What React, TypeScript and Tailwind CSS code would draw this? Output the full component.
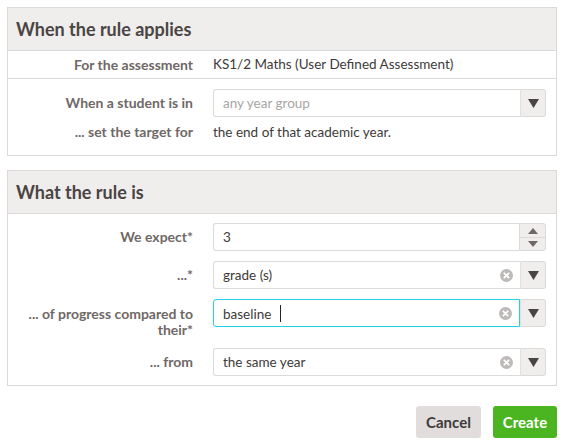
import React from "react";

const font = { fontFamily: "Lato, 'Noto Sans', sans-serif" };

function Caret() {
  return (
    <svg width="11" height="9" viewBox="0 0 11 9">
      <path d="M0 0 H11 L5.5 9 Z" fill="#4a4443" />
    </svg>
  );
}

function ClearIcon() {
  return (
    <svg width="13" height="13" viewBox="0 0 13 13">
      <circle cx="6.5" cy="6.5" r="6.5" fill="#bdbab9" />
      <path d="M4.3 4.3 L8.7 8.7 M8.7 4.3 L4.3 8.7" stroke="#fff" strokeWidth="1.8" strokeLinecap="round" />
    </svg>
  );
}

function SelectBox({
  value,
  placeholder,
  clearable,
  focused,
}: {
  value?: string;
  placeholder?: string;
  clearable?: boolean;
  focused?: boolean;
}) {
  return (
    <div className="flex h-[28px] w-full">
      <div
        className={
          focused
            ? "flex flex-1 items-center rounded-l-[3px] border border-[#1fd3e6] bg-white pl-[9px] pr-[7px]"
            : "flex flex-1 items-center rounded-l-[3px] border border-r-0 border-[#dcdad9] bg-white pl-[9px] pr-[7px]"
        }
      >
        {value ? (
          <span className="text-[13.5px] text-[#3d3a39]">
            {value}
            {focused && <span className="ml-[9px] inline-block h-[17px] w-[1px] translate-y-[3px] bg-[#222]" />}
          </span>
        ) : (
          <span className="text-[13.5px] text-[#a9a5a4]">{placeholder}</span>
        )}
        <div className="flex-1" />
        {clearable && <ClearIcon />}
      </div>
      <div className="flex w-[26px] items-center justify-center rounded-r-[3px] border border-l-[#e2e0df] border-[#dcdad9] bg-[#efeeed]">
        <Caret />
      </div>
    </div>
  );
}

function NumberBox({ value }: { value: string }) {
  return (
    <div className="flex h-[28px] w-full">
      <div className="flex flex-1 items-center rounded-l-[3px] border border-r-0 border-[#dcdad9] bg-white pl-[9px]">
        <span className="text-[13.5px] text-[#3d3a39]">{value}</span>
      </div>
      <div className="flex w-[27px] flex-col rounded-r-[3px] border border-[#dcdad9] bg-[#efeeed]">
        <div className="flex flex-1 items-center justify-center border-b border-[#dcdad9]">
          <svg width="10" height="6" viewBox="0 0 10 6">
            <path d="M0 6 H10 L5 0 Z" fill="#6f6866" />
          </svg>
        </div>
        <div className="flex flex-1 items-center justify-center">
          <svg width="10" height="6" viewBox="0 0 10 6">
            <path d="M0 0 H10 L5 6 Z" fill="#6f6866" />
          </svg>
        </div>
      </div>
    </div>
  );
}

function Label({ children }: { children: React.ReactNode }) {
  return (
    <div className="text-right text-[14px] font-bold leading-[16px] text-[#6f6866]">{children}</div>
  );
}

function Header({ title }: { title: string }) {
  return (
    <div className="flex h-[43px] items-center border-b border-[#dcdad9] bg-[#efeeed] pl-[8px]">
      <h2 className="text-[18px] font-bold text-[#4a4443]">{title}</h2>
    </div>
  );
}

export default function App() {
  return (
    <div className="min-h-[447px] w-[564px] bg-white p-[7px]" style={font}>
      <div className="border border-[#dcdad9]">
        <Header title="When the rule applies" />
        <div className="grid h-[28px] grid-cols-[185px_1fr] items-center gap-x-[20px] border-b border-[#dcdad9] pr-[10px]">
          <Label>For the assessment</Label>
          <div className="text-[13.5px] text-[#3d3a39]">KS1/2 Maths (User Defined Assessment)</div>
        </div>
        <div className="grid grid-cols-[185px_1fr] items-center gap-x-[20px] gap-y-[5px] pb-[13px] pl-0 pr-[10px] pt-[10px]">
          <Label>When a student is in</Label>
          <SelectBox placeholder="any year group" />
          <Label>... set the target for</Label>
          <div className="text-[13.5px] text-[#3d3a39]">the end of that academic year.</div>
        </div>
      </div>

      <div className="mt-[14px] border border-[#dcdad9]">
        <Header title="What the rule is" />
        <div className="grid grid-cols-[185px_1fr] items-center gap-x-[20px] gap-y-[10px] pb-[9px] pr-[10px] pt-[9px]">
          <Label>We expect*</Label>
          <NumberBox value="3" />
          <Label>...*</Label>
          <SelectBox value="grade (s)" clearable />
          <div className="self-start pt-[7px]">
            <Label>
              ... of progress compared to
              <br />
              their*
            </Label>
          </div>
          <div className="self-start">
            <SelectBox value="baseline" clearable focused />
          </div>
          <Label>... from</Label>
          <SelectBox value="the same year" clearable />
        </div>
      </div>

      <div className="mt-[20px] flex justify-end gap-[12px]">
        <button className="h-[32px] w-[65px] rounded-[3px] bg-[#e1dddc] text-[15px] font-bold text-[#3d3a39]">
          Cancel
        </button>
        <button className="h-[32px] w-[64px] rounded-[3px] bg-[#4bb421] text-[15px] font-bold text-white">
          Create
        </button>
      </div>
    </div>
  );
}
